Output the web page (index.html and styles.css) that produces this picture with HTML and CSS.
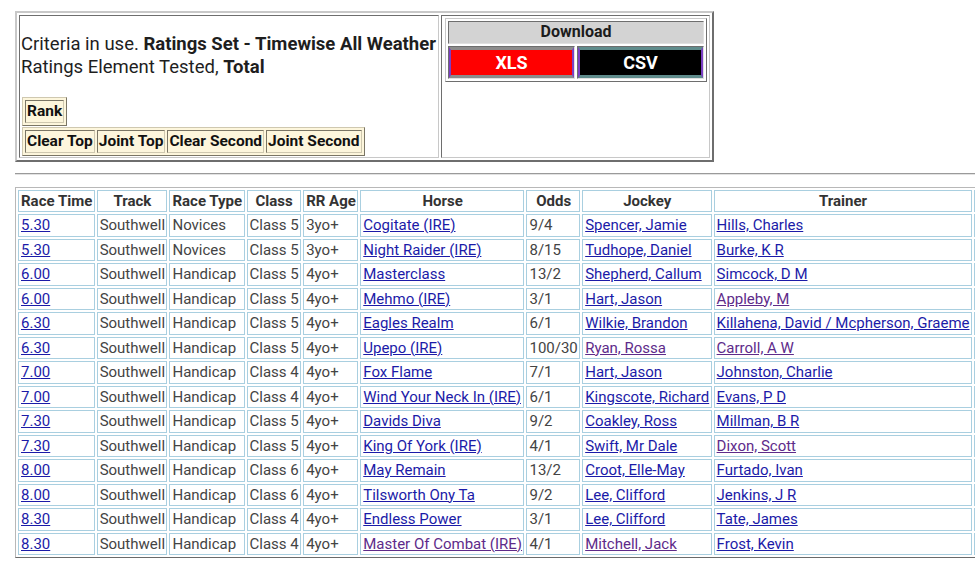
FILE: index.html
```html
<!DOCTYPE html>
<html lang="en">
<head>
<meta charset="utf-8">
<title>Ratings Results</title>
<link rel="stylesheet" href="styles.css">
</head>
<body>
<table class="top">
  <tr>
    <td class="criteria">
      <p class="crit-text">Criteria in use. <b>Ratings Set - Timewise All Weather</b><br>Ratings Element Tested, <b>Total</b></p>
      <table class="btns rank"><tr><td>Rank</td></tr></table>
      <table class="btns"><tr><td>Clear Top</td><td>Joint Top</td><td>Clear Second</td><td>Joint Second</td></tr></table>
    </td>
    <td class="dl-cell">
      <table class="download">
        <tr><th colspan="2">Download</th></tr>
        <tr><td class="fmt"><span class="btn xls">XLS</span></td><td class="fmt"><span class="btn csv">CSV</span></td></tr>
      </table>
    </td>
  </tr>
</table>
<hr class="rule">
<table class="results">
  <tr><th>Race Time</th><th>Track</th><th>Race Type</th><th>Class</th><th>RR Age</th><th>Horse</th><th>Odds</th><th>Jockey</th><th>Trainer</th><th class="more"></th></tr>
  <tr><td><a href="#">5.30</a></td><td>Southwell</td><td>Novices</td><td>Class 5</td><td>3yo+</td><td><a href="#">Cogitate (IRE)</a></td><td>9/4</td><td><a href="#">Spencer, Jamie</a></td><td><a href="#">Hills, Charles</a></td><td class="more"></td></tr>
  <tr><td><a href="#">5.30</a></td><td>Southwell</td><td>Novices</td><td>Class 5</td><td>3yo+</td><td><a href="#">Night Raider (IRE)</a></td><td>8/15</td><td><a href="#">Tudhope, Daniel</a></td><td><a href="#">Burke, K R</a></td><td class="more"></td></tr>
  <tr><td><a href="#">6.00</a></td><td>Southwell</td><td>Handicap</td><td>Class 5</td><td>4yo+</td><td><a href="#">Masterclass</a></td><td>13/2</td><td><a href="#">Shepherd, Callum</a></td><td><a href="#">Simcock, D M</a></td><td class="more"></td></tr>
  <tr><td><a href="#">6.00</a></td><td>Southwell</td><td>Handicap</td><td>Class 5</td><td>4yo+</td><td><a href="#">Mehmo (IRE)</a></td><td>3/1</td><td><a href="#">Hart, Jason</a></td><td><a class="v" href="#">Appleby, M</a></td><td class="more"></td></tr>
  <tr><td><a href="#">6.30</a></td><td>Southwell</td><td>Handicap</td><td>Class 5</td><td>4yo+</td><td><a href="#">Eagles Realm</a></td><td>6/1</td><td><a href="#">Wilkie, Brandon</a></td><td><a href="#">Killahena, David / Mcpherson, Graeme</a></td><td class="more"></td></tr>
  <tr><td><a href="#">6.30</a></td><td>Southwell</td><td>Handicap</td><td>Class 5</td><td>4yo+</td><td><a href="#">Upepo (IRE)</a></td><td>100/30</td><td><a class="v" href="#">Ryan, Rossa</a></td><td><a class="v" href="#">Carroll, A W</a></td><td class="more"></td></tr>
  <tr><td><a href="#">7.00</a></td><td>Southwell</td><td>Handicap</td><td>Class 4</td><td>4yo+</td><td><a href="#">Fox Flame</a></td><td>7/1</td><td><a href="#">Hart, Jason</a></td><td><a href="#">Johnston, Charlie</a></td><td class="more"></td></tr>
  <tr><td><a href="#">7.00</a></td><td>Southwell</td><td>Handicap</td><td>Class 4</td><td>4yo+</td><td><a href="#">Wind Your Neck In (IRE)</a></td><td>6/1</td><td><a href="#">Kingscote, Richard</a></td><td><a href="#">Evans, P D</a></td><td class="more"></td></tr>
  <tr><td><a href="#">7.30</a></td><td>Southwell</td><td>Handicap</td><td>Class 5</td><td>4yo+</td><td><a href="#">Davids Diva</a></td><td>9/2</td><td><a href="#">Coakley, Ross</a></td><td><a href="#">Millman, B R</a></td><td class="more"></td></tr>
  <tr><td><a href="#">7.30</a></td><td>Southwell</td><td>Handicap</td><td>Class 5</td><td>4yo+</td><td><a href="#">King Of York (IRE)</a></td><td>4/1</td><td><a href="#">Swift, Mr Dale</a></td><td><a class="v" href="#">Dixon, Scott</a></td><td class="more"></td></tr>
  <tr><td><a href="#">8.00</a></td><td>Southwell</td><td>Handicap</td><td>Class 6</td><td>4yo+</td><td><a href="#">May Remain</a></td><td>13/2</td><td><a href="#">Croot, Elle-May</a></td><td><a href="#">Furtado, Ivan</a></td><td class="more"></td></tr>
  <tr><td><a href="#">8.00</a></td><td>Southwell</td><td>Handicap</td><td>Class 6</td><td>4yo+</td><td><a href="#">Tilsworth Ony Ta</a></td><td>9/2</td><td><a href="#">Lee, Clifford</a></td><td><a href="#">Jenkins, J R</a></td><td class="more"></td></tr>
  <tr><td><a href="#">8.30</a></td><td>Southwell</td><td>Handicap</td><td>Class 4</td><td>4yo+</td><td><a href="#">Endless Power</a></td><td>3/1</td><td><a href="#">Lee, Clifford</a></td><td><a href="#">Tate, James</a></td><td class="more"></td></tr>
  <tr><td><a href="#">8.30</a></td><td>Southwell</td><td>Handicap</td><td>Class 4</td><td>4yo+</td><td><a class="v" href="#">Master Of Combat (IRE)</a></td><td>4/1</td><td><a class="v" href="#">Mitchell, Jack</a></td><td><a href="#">Frost, Kevin</a></td><td class="more"></td></tr>
</table>
</body>
</html>
```

FILE: styles.css
```css
html {
  overflow: hidden;
  background: #fff;
}

body {
  margin: 11px 0 0 15px;
  font-family: Roboto, "Liberation Sans", Arial, sans-serif;
  font-size: 16px;
  color: #222;
}

table {
  border-collapse: separate;
  border-spacing: 2px;
}

/* top criteria / download block */
.top {
  border: 2px solid;
  border-color: #c8c8c8 #6e6e6e #6e6e6e #c8c8c8;
}

.top > tbody > tr > td {
  border: 1px solid;
  border-color: #6e6e6e #c8c8c8 #c8c8c8 #6e6e6e;
  padding: 1px;
}

.criteria {
  width: 416px;
  vertical-align: bottom;
}

.crit-text {
  margin: 0 0 18px 0;
  padding-top: 16px;
  font-size: 18.5px;
  line-height: 23px;
  color: #1e1e1e;
  white-space: nowrap;
}

.btns {
  margin-left: 1px;
  background: #fdf6dc;
  border: 1px solid;
  border-color: #cfc8b0 #7a7565 #7a7565 #cfc8b0;
}

.btns td {
  border: 1px solid;
  border-color: #7a7565 #cfc8b0 #cfc8b0 #7a7565;
  padding: 1px;
  font-size: 15.5px;
  font-weight: bold;
  color: #111;
  line-height: 18.75px;
  white-space: nowrap;
}

.rank {
  margin-bottom: 1px;
}

.dl-cell {
  width: 265px;
  vertical-align: top;
}

.download {
  margin: 1px 0 0 2px;
  width: 262px;
  border: 1px solid;
  border-color: #c8c8c8 #6e6e6e #6e6e6e #c8c8c8;
}

.download th {
  background: #d3d3d3;
  border: 1px solid;
  border-color: #6e6e6e #e0e0e0 #e0e0e0 #6e6e6e;
  padding: 1px;
  font-weight: bold;
  color: #1c1c1c;
  line-height: 18.75px;
}

.download .fmt {
  border: 1px solid;
  border-color: #6e6e6e #e0e0e0 #e0e0e0 #6e6e6e;
  padding: 0;
  width: 50%;
}

.btn {
  display: block;
  height: 25px;
  line-height: 25px;
  text-align: center;
  font-weight: bold;
  font-size: 18px;
  color: #fff;
  border-style: solid;
  border-width: 3px 2px;
}

.xls {
  background: #ff0000;
  border-color: #8c8c8c #7b3fc4;
}

.csv {
  background: #000;
  border-color: #5f8c8c #7b3fc4;
}

.rule {
  margin: 11px 0 12px 0;
  border: 0;
  border-top: 1px solid #9a9a9a;
  border-bottom: 1px solid #e2e2e2;
  height: 0;
}

/* results table */
.results {
  border: 1px solid;
  border-color: #b8b8b8 #6a6a6a #6a6a6a #b8b8b8;
  white-space: nowrap;
}

.results th,
.results td {
  border: 1px solid #a9cfe0;
  padding: 1px 1.4px 1px 2px;
  line-height: 18.5px;
  font-size: 15px;
}

.results th {
  font-weight: bold;
  color: #333;
}

.results td {
  color: #444;
  text-align: left;
}

.results .more {
  min-width: 60px;
  width: 60px;
}

.results a {
  color: #1b1ba8;
  text-decoration: underline;
}

.results a.v {
  color: #5e2b8a;
}
```
